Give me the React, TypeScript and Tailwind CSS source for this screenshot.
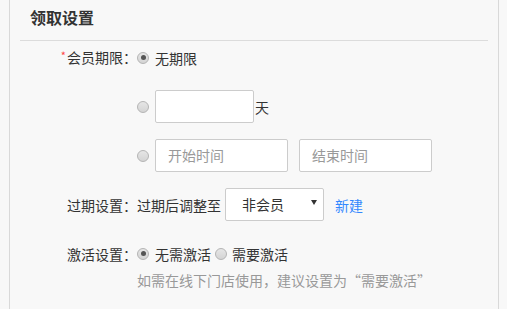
import React from 'react';

const font = { fontFamily: '"Noto Sans CJK SC", "Noto Sans", sans-serif' };

function Radio({ checked = false }: { checked?: boolean }) {
  return (
    <span className="flex h-[12px] w-[12px] shrink-0 items-center justify-center rounded-full border border-[#b4b4b4] bg-gradient-to-b from-[#e6e6e6] to-[#d4d4d4]">
      {checked && <span className="h-[5px] w-[5px] rounded-full bg-[#555]" />}
    </span>
  );
}

function Row({ label, required = false, children }: { label?: string; required?: boolean; children: React.ReactNode }) {
  return (
    <div className="flex h-[33px] items-center">
      <div className="w-[117px] shrink-0 text-right text-[14px] leading-[20px] text-[#333]">
        {required && <span className="relative -top-[3px] mr-[1px] text-[11px] text-[#f44]">*</span>}
        {label}
      </div>
      <div className="flex items-center">{children}</div>
    </div>
  );
}

export default function App() {
  return (
    <div className="min-h-[309px] w-full bg-[#f8f8f8]" style={font}>
      <div className="ml-[9px] min-h-[309px] w-[490px] border-x border-[#d9d9d9] px-[10px]">
        <div className="h-[41px] border-b border-[#dcdcdc] pl-[10px] pt-[6px] text-[16px] font-bold leading-[22px] text-[#333]">
          领取设置
        </div>

        <div className="flex flex-col gap-[16px]">
          <Row label="会员期限：" required>
            <Radio checked />
            <span className="ml-[6px] text-[14px] leading-[20px] text-[#333]">无期限</span>
          </Row>

          <Row>
            <Radio />
            <div className="ml-[6px] h-[33px] w-[99px] rounded-[2px] border border-[#cccccc] bg-white" />
            <span className="ml-[1px] text-[14px] leading-[20px] text-[#333]">天</span>
          </Row>

          <Row>
            <Radio />
            <div className="ml-[6px] flex h-[33px] w-[133px] items-center rounded-[2px] border border-[#cccccc] bg-white pl-[12px] text-[14px] text-[#999]">
              开始时间
            </div>
            <div className="ml-[11px] flex h-[33px] w-[133px] items-center rounded-[2px] border border-[#cccccc] bg-white pl-[12px] text-[14px] text-[#999]">
              结束时间
            </div>
          </Row>

          <Row label="过期设置：">
            <span className="text-[14px] leading-[20px] text-[#333]">过期后调整至</span>
            <div className="ml-[4px] flex h-[33px] w-[99px] items-center justify-between rounded-[2px] border border-[#cccccc] bg-white pl-[16px] pr-[6px]">
              <span className="text-[14px] text-[#333]">非会员</span>
              <svg width="6" height="5" viewBox="0 0 6 5" className="-mt-[4px]">
                <polygon points="0,0 6,0 3,5" fill="#333" />
              </svg>
            </div>
            <span className="ml-[11px] text-[14px] leading-[20px] text-[#3388ff]">新建</span>
          </Row>

          <div>
            <Row label="激活设置：">
              <Radio checked />
              <span className="ml-[6px] text-[14px] leading-[20px] text-[#333]">无需激活</span>
              <span className="ml-[4px]">
                <Radio />
              </span>
              <span className="ml-[5px] text-[14px] leading-[20px] text-[#333]">需要激活</span>
            </Row>
            <div className="pl-[117px] text-[14px] leading-[20px] text-[#999]">
              如需在线下门店使用，建议设置为“需要激活”
            </div>
          </div>
        </div>
      </div>
    </div>
  );
}
